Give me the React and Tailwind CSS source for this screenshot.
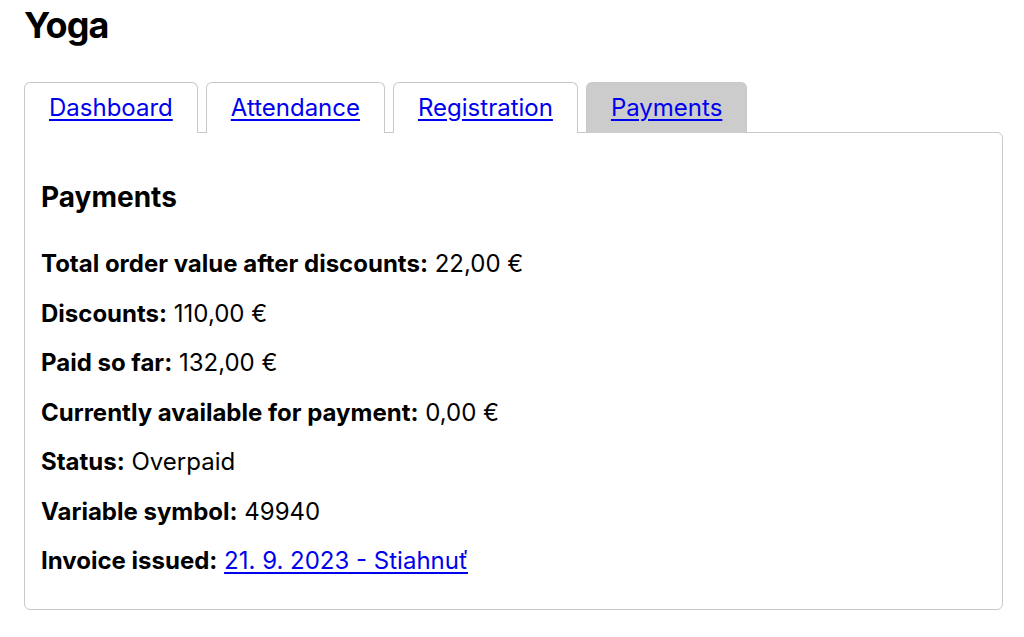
export default function App() {
  const tabs = ["Dashboard", "Attendance", "Registration", "Payments"];
  const active = "Payments";
  const rows = [
    ["Total order value after discounts:", "22,00 €"],
    ["Discounts:", "110,00 €"],
    ["Paid so far:", "132,00 €"],
    ["Currently available for payment:", "0,00 €"],
    ["Status:", "Overpaid"],
    ["Variable symbol:", "49940"],
  ];

  return (
    <div className="min-h-screen bg-white px-6 pt-px font-['Inter',sans-serif] text-black">
      {/* Title */}
      <h1 className="text-[36px] font-bold leading-[48px] tracking-tight">Yoga</h1>

      {/* Tabs */}
      <div className="mt-[33px] flex gap-2">
        {tabs.map((t) => (
          <div
            key={t}
            className={`-mb-px flex h-[51px] items-center rounded-t-md border border-b-0 border-[#c8c8c8] px-6 ${
              t === active ? "bg-[#cccccc]" : "bg-white"
            }`}
          >
            <a href="#" className="text-[24px] text-[#0000ee] underline underline-offset-[3px]">
              {t}
            </a>
          </div>
        ))}
      </div>

      {/* Panel */}
      <div className="w-[979px] rounded-b-md rounded-tr-md border border-[#c8c8c8] px-4 pb-8 pt-12">
        <h2 className="text-[28px] font-bold leading-8">Payments</h2>
        <div className="mt-[35px] flex flex-col gap-[17.5px] text-[24px] leading-8">
          {rows.map(([k, v]) => (
            <p key={k}>
              <span className="font-bold">{k}</span> {v}
            </p>
          ))}
          <p>
            <span className="font-bold">Invoice issued:</span>{" "}
            <a href="#" className="text-[#0000ee] underline underline-offset-[3px]">
              21. 9. 2023 - Stiahnuť
            </a>
          </p>
        </div>
      </div>
    </div>
  );
}
